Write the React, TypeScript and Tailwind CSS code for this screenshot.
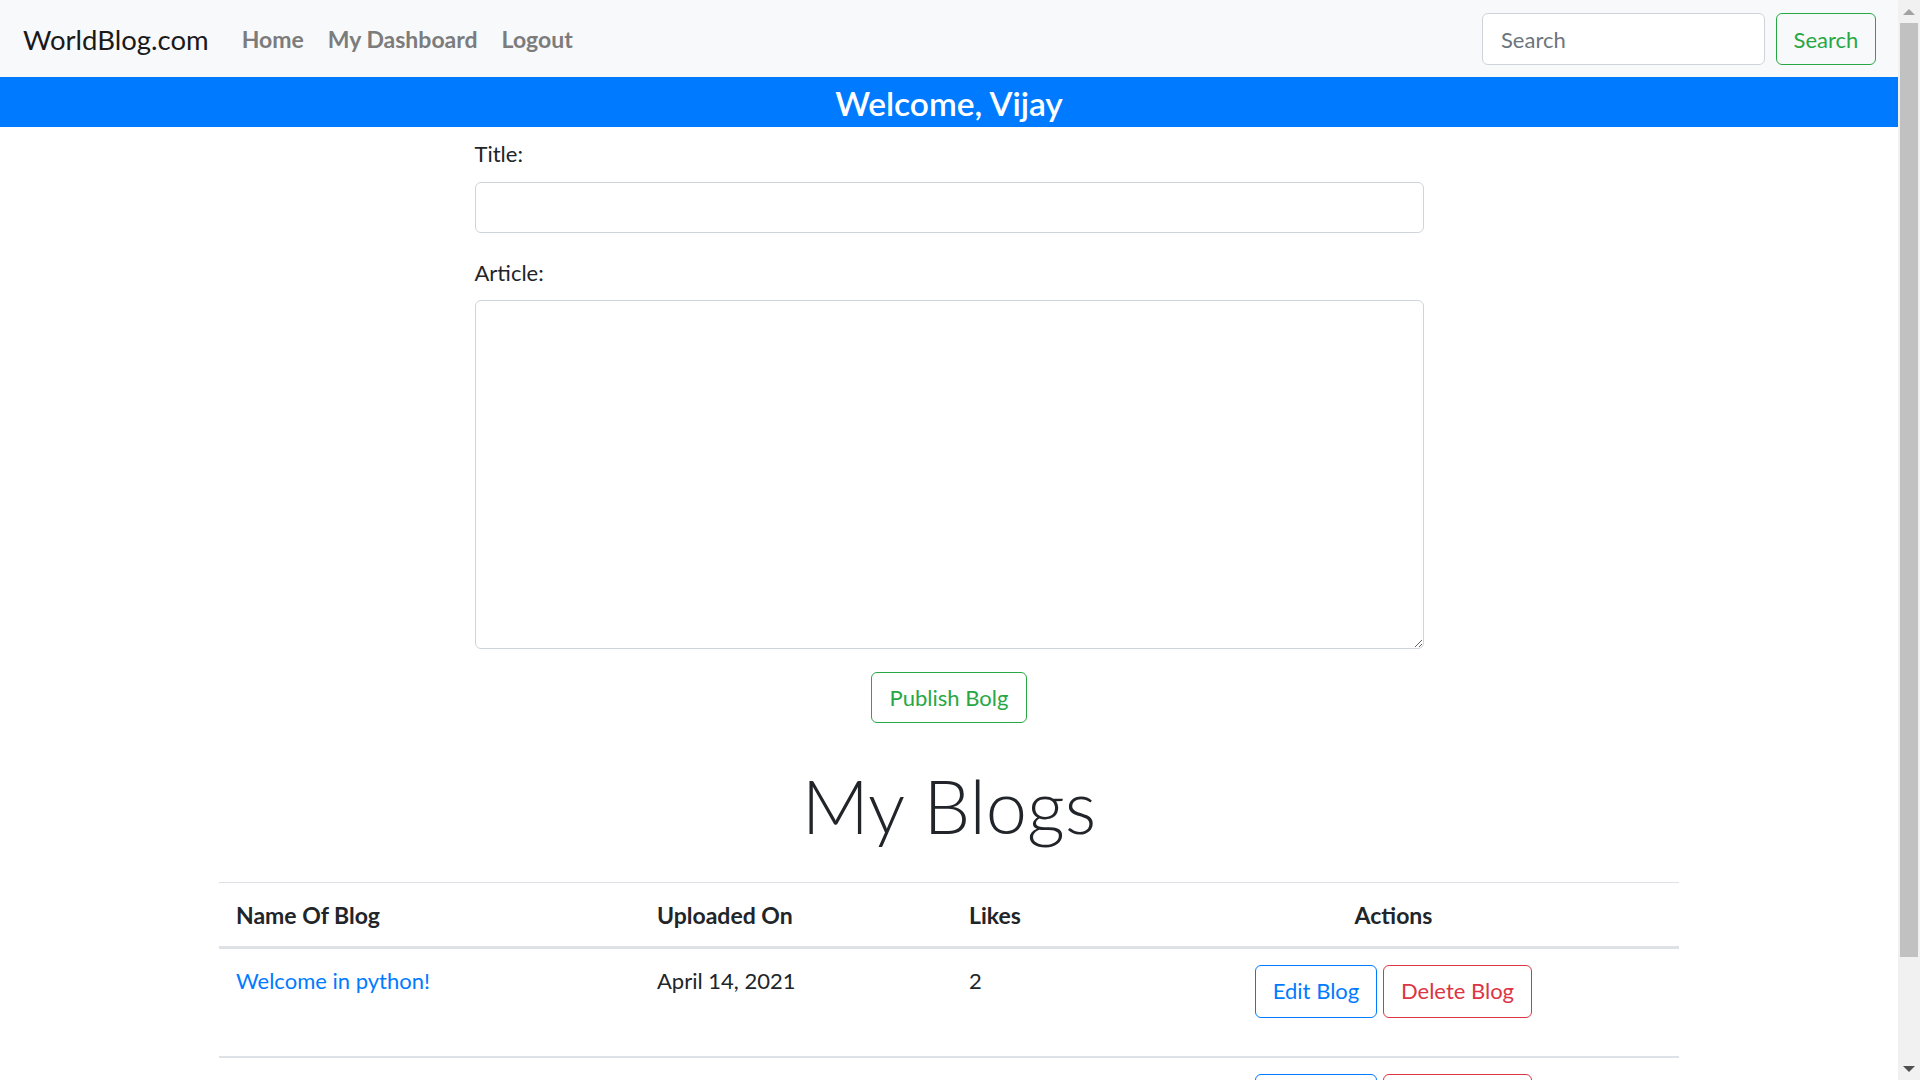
import React from "react";

const BLOGS = [
  { title: "Welcome in python!", date: "April 14, 2021", likes: 2 },
  { title: "Getting started", date: "April 14, 2021", likes: 0 },
];

function Navbar() {
  return (
    <nav className="flex h-[77px] items-center bg-[#f8f9fa] pl-[23px] pr-[22px]">
      <a className="mt-[3px] text-[27.5px] leading-none text-[#1a1a1a]">WorldBlog.com</a>
      <ul className="ml-[21px] mt-[4px] flex items-center">
        {["Home", "My Dashboard", "Logout"].map((l) => (
          <li key={l}>
            <a className="px-[12px] text-[23px] font-bold leading-none text-[#7c7c7d]">{l}</a>
          </li>
        ))}
      </ul>
      <form className="ml-auto flex items-center gap-[11px]">
        <input
          placeholder="Search"
          className="h-[52px] w-[283px] rounded-[6px] border border-[#ced4da] bg-white px-[18px] pt-[2px] text-[22px] text-[#495057] placeholder:text-[#6c757d] focus:outline-none"
        />
        <button
          type="button"
          className="h-[52px] w-[100px] rounded-[6px] border border-[#28a745] pt-[2px] text-[22px] text-[#28a745]"
        >
          Search
        </button>
      </form>
    </nav>
  );
}

function PostForm() {
  return (
    <form className="mx-auto flex w-[949px] flex-col pt-[9px]">
      <label className="mb-[10px] text-[22px] leading-[36px]">Title:</label>
      <input className="h-[51px] rounded-[6px] border border-[#ced4da] px-[18px] text-[22px] focus:outline-none" />
      <label className="mb-[9px] mt-[22px] text-[22px] leading-[36px]">Article:</label>
      <textarea className="h-[349px] rounded-[6px] border border-[#ced4da] px-[18px] py-[9px] text-[22px] focus:outline-none" />
      <button
        type="button"
        className="mx-auto mt-[23px] h-[51px] w-[156px] rounded-[6px] border border-[#28a745] text-[22px] text-[#28a745]"
      >
        Publish Bolg
      </button>
    </form>
  );
}

function BlogTable() {
  const cols = "grid grid-cols-[421px_312px_156px_571px]";
  return (
    <div className="mx-auto w-[1460px]">
      <div className={`${cols} h-[67px] items-center border-t border-b-[3px] border-[#dee2e6] pt-[2px] text-[23px] font-bold leading-[36px]`}>
        <div className="pl-[17px]">Name Of Blog</div>
        <div className="pl-[17px]">Uploaded On</div>
        <div className="pl-[17px]">Likes</div>
        <div className="text-center">Actions</div>
      </div>
      {BLOGS.map((b) => (
        <div key={b.title} className={`${cols} h-[109px] border-b-2 border-[#dee2e6] text-[22px] leading-[36px]`}>
          <div className="pl-[17px] pt-[14px]">
            <a className="text-[#007bff]">{b.title}</a>
          </div>
          <div className="pl-[17px] pt-[14px]">{b.date}</div>
          <div className="pl-[17px] pt-[14px]">{b.likes}</div>
          <div className="flex justify-center gap-[6px] pt-[16px]">
            <button type="button" className="h-[53px] w-[122px] rounded-[6px] border border-[#007bff] text-[#007bff]">
              Edit Blog
            </button>
            <button type="button" className="h-[53px] w-[149px] rounded-[6px] border border-[#dc3545] text-[#dc3545]">
              Delete Blog
            </button>
          </div>
        </div>
      ))}
    </div>
  );
}

function Scrollbar() {
  return (
    <div className="flex h-full w-[22px] flex-col bg-[#f1f1f1]">
      <div className="flex h-[23px] items-center justify-center">
        <div className="h-0 w-0 border-x-[6px] border-b-[6px] border-x-transparent border-b-[#a3a3a3]" />
      </div>
      <div className="mx-[2px] h-[934px] bg-[#c1c1c1]" />
      <div className="flex-1" />
      <div className="flex h-[23px] items-center justify-center">
        <div className="h-0 w-0 border-x-[6px] border-t-[6px] border-x-transparent border-t-[#505050]" />
      </div>
    </div>
  );
}

export default function App() {
  return (
    <div className="flex h-[1080px] w-[1920px] overflow-hidden bg-white font-['Lato',sans-serif] text-[#212529]">
      <main className="h-full w-[1898px] overflow-hidden">
        <Navbar />
        <div className="flex h-[50px] items-center justify-center bg-[#007bff] pt-[3px]">
          <h4 className="text-[33.5px] font-semibold leading-none text-white">Welcome, Vijay</h4>
        </div>
        <PostForm />
        <h1 className="mb-[31px] mt-[39px] text-center text-[74px] font-light leading-[1.2]">My Blogs</h1>
        <BlogTable />
      </main>
      <Scrollbar />
    </div>
  );
}
